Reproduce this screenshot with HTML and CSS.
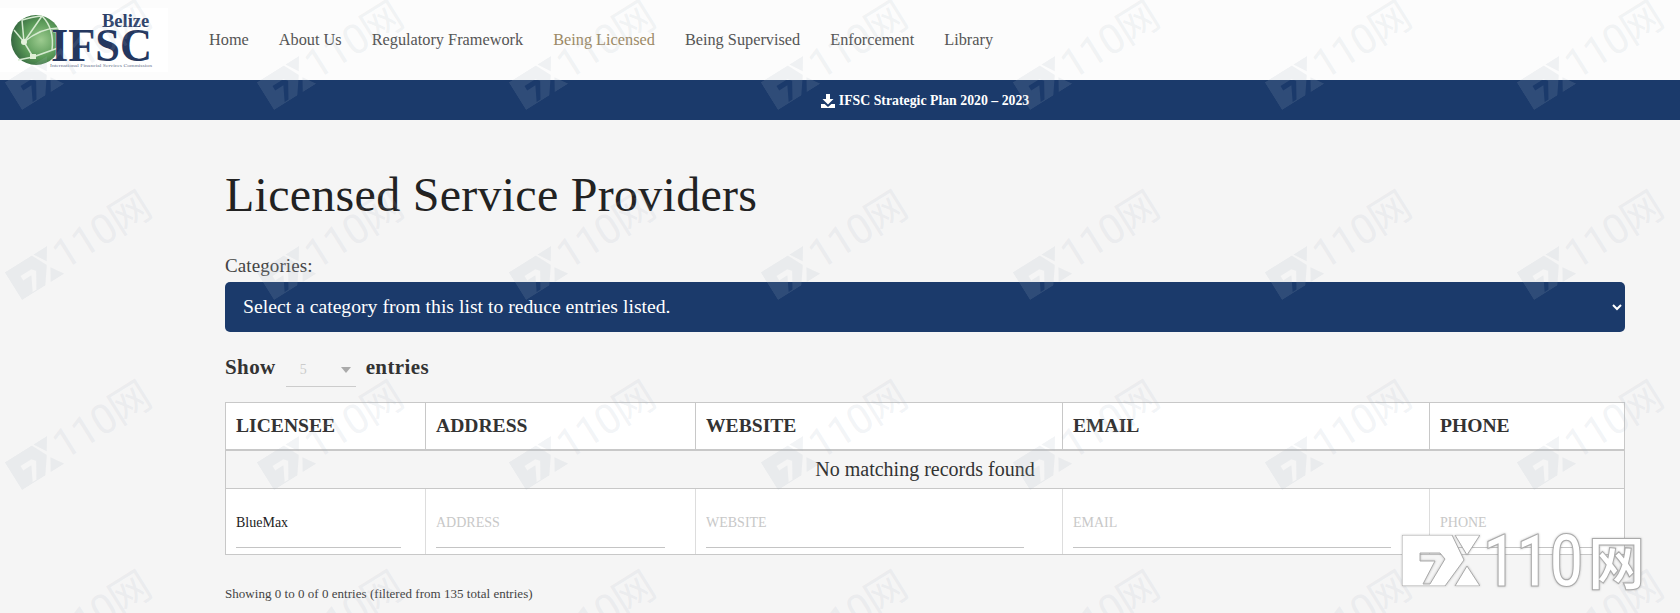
FILE: index.html
```html
<!DOCTYPE html>
<html lang="en">
<head>
<meta charset="utf-8">
<title>Licensed Service Providers</title>
<link rel="stylesheet" href="styles.css">
</head>
<body>
<svg class="defs" width="0" height="0" aria-hidden="true">
  <defs>
    <symbol id="fxmark" viewBox="0 0 78 51">
      <path fill-rule="evenodd" d="M0 0H50L62 25L43 51H0ZM18 18V26H33L21 49H28L43 24L38 18Z"/>
      <path d="M53 0H78L65 20Z"/>
      <path d="M65 31L78 51H53Z"/>
    </symbol>
    <radialGradient id="globe" cx="0.6" cy="0.5" r="0.65">
      <stop offset="0" stop-color="#9ccb8f"/>
      <stop offset="0.55" stop-color="#5a9a58"/>
      <stop offset="1" stop-color="#2f5f3c"/>
    </radialGradient>
  </defs>
</svg>

<header class="site-header">
  <a class="logo" href="#">
    <svg class="logo-art" width="168" height="64" viewBox="0 8 168 64">
      <circle cx="36" cy="40" r="25" fill="url(#globe)"/>
      <path class="globe-lines" d="M24 42L22 20M24 42L42 16M24 42L14 30M24 42L33 57L58 48M24 42L33 57L18 60M24 42C36 32 48 28 58 28M42 16C50 24 54 34 52 50M22 20C30 18 36 16 42 16"/>
      <circle cx="24" cy="42" r="3" fill="#e4f2dc"/>
      <rect x="30" y="54" width="6" height="5" fill="#dff0d6"/>
      <text class="logo-belize" x="102" y="27">Belize</text>
      <text class="logo-ifsc" x="51" y="61" textLength="101" lengthAdjust="spacingAndGlyphs">IFSC</text>
      <text class="logo-sub" x="50" y="67" textLength="102" lengthAdjust="spacingAndGlyphs">International Financial Services Commission</text>
    </svg>
  </a>
  <nav class="main-nav">
    <a href="#">Home</a>
    <a href="#">About Us</a>
    <a href="#">Regulatory Framework</a>
    <a href="#" class="active">Being Licensed</a>
    <a href="#">Being Supervised</a>
    <a href="#">Enforcement</a>
    <a href="#">Library</a>
  </nav>
</header>

<div class="banner">
  <a href="#">
    <svg class="dl-icon" width="14" height="14" viewBox="0 0 14 14"><path d="M5 0H9V5H12.5L7 10.5L1.5 5H5ZM0 10H3.6L7 13L10.4 10H14V14H0Z"/></svg>
    IFSC Strategic Plan 2020 – 2023
  </a>
</div>

<main class="content">
  <h1>Licensed Service Providers</h1>
  <label class="cat-label" for="cat">Categories:</label>
  <select class="cat-select" id="cat">
    <option>Select a category from this list to reduce entries listed.</option>
  </select>

  <div class="length-row">
    <span class="length-word">Show</span>
    <div class="length-select"><span>5</span><i class="caret"></i></div>
    <span class="length-word">entries</span>
  </div>

  <table class="data">
    <colgroup>
      <col class="c1"><col class="c2"><col class="c3"><col class="c4"><col class="c5">
    </colgroup>
    <thead>
      <tr><th>LICENSEE</th><th>ADDRESS</th><th>WEBSITE</th><th>EMAIL</th><th>PHONE</th></tr>
    </thead>
    <tbody>
      <tr class="empty"><td colspan="5">No matching records found</td></tr>
    </tbody>
    <tfoot>
      <tr>
        <td><input type="text" value="BlueMax" placeholder="LICENSEE"></td>
        <td><input type="text" placeholder="ADDRESS"></td>
        <td><input type="text" placeholder="WEBSITE"></td>
        <td><input type="text" placeholder="EMAIL"></td>
        <td><input type="text" placeholder="PHONE"></td>
      </tr>
    </tfoot>
  </table>
  <p class="info">Showing 0 to 0 of 0 entries (filtered from 135 total entries)</p>
</main>

<div class="watermarks" aria-hidden="true">
  <div class="wm-grid">
    <div class="wm"><svg><use href="#fxmark"/></svg><span>110网</span></div>
    <div class="wm"><svg><use href="#fxmark"/></svg><span>110网</span></div>
    <div class="wm"><svg><use href="#fxmark"/></svg><span>110网</span></div>
    <div class="wm"><svg><use href="#fxmark"/></svg><span>110网</span></div>
    <div class="wm"><svg><use href="#fxmark"/></svg><span>110网</span></div>
    <div class="wm"><svg><use href="#fxmark"/></svg><span>110网</span></div>
    <div class="wm"><svg><use href="#fxmark"/></svg><span>110网</span></div>
    <div class="wm"><svg><use href="#fxmark"/></svg><span>110网</span></div>
    <div class="wm"><svg><use href="#fxmark"/></svg><span>110网</span></div>
    <div class="wm"><svg><use href="#fxmark"/></svg><span>110网</span></div>
    <div class="wm"><svg><use href="#fxmark"/></svg><span>110网</span></div>
    <div class="wm"><svg><use href="#fxmark"/></svg><span>110网</span></div>
    <div class="wm"><svg><use href="#fxmark"/></svg><span>110网</span></div>
    <div class="wm"><svg><use href="#fxmark"/></svg><span>110网</span></div>
    <div class="wm"><svg><use href="#fxmark"/></svg><span>110网</span></div>
    <div class="wm"><svg><use href="#fxmark"/></svg><span>110网</span></div>
    <div class="wm"><svg><use href="#fxmark"/></svg><span>110网</span></div>
    <div class="wm"><svg><use href="#fxmark"/></svg><span>110网</span></div>
    <div class="wm"><svg><use href="#fxmark"/></svg><span>110网</span></div>
    <div class="wm"><svg><use href="#fxmark"/></svg><span>110网</span></div>
    <div class="wm"><svg><use href="#fxmark"/></svg><span>110网</span></div>
    <div class="wm"><svg><use href="#fxmark"/></svg><span>110网</span></div>
    <div class="wm"><svg><use href="#fxmark"/></svg><span>110网</span></div>
    <div class="wm"><svg><use href="#fxmark"/></svg><span>110网</span></div>
    <div class="wm"><svg><use href="#fxmark"/></svg><span>110网</span></div>
    <div class="wm"><svg><use href="#fxmark"/></svg><span>110网</span></div>
    <div class="wm"><svg><use href="#fxmark"/></svg><span>110网</span></div>
    <div class="wm"><svg><use href="#fxmark"/></svg><span>110网</span></div>
  </div>
</div>

<svg class="corner-logo" width="250" height="60" viewBox="0 0 250 60" aria-label="FX110网">
  <use href="#fxmark" x="3" y="4" width="78" height="51" class="corner-mark"/>
  <text class="corner-digits" x="84" y="55" textLength="100" lengthAdjust="spacingAndGlyphs">110</text>
  <text class="corner-cjk" x="189" y="53">网</text>
</svg>
</body>
</html>
```

FILE: styles.css
```css
* { box-sizing: border-box; }

html, body {
  margin: 0;
  padding: 0;
  height: 100%;
  overflow: hidden;
}

body {
  position: relative;
  background: #f5f5f5;
  color: #333;
  font-family: "Liberation Serif", "Times New Roman", serif;
}

a { color: inherit; text-decoration: none; }

.defs { position: absolute; }

/* Header */
.site-header {
  display: flex;
  align-items: center;
  height: 80px;
  background: #fcfcfc;
}

.logo {
  display: block;
  width: 168px;
  height: 64px;
  background: #fff;
}

.logo-art { display: block; }

.globe-lines {
  fill: none;
  stroke: #d5ead0;
  stroke-width: 1.5;
}

.logo-belize {
  font: bold 18.5px "Liberation Serif", serif;
  fill: #2c4068;
}

.logo-ifsc {
  font: bold 46px "Liberation Serif", serif;
  fill: #24375f;
  stroke: #fff;
  stroke-width: .6;
  paint-order: stroke;
}

.logo-sub {
  font: 5px "Liberation Serif", serif;
  fill: #69748c;
}

.main-nav {
  display: flex;
  gap: 30px;
  margin-left: 41px;
  font-size: 16.3px;
  color: #555;
}

.main-nav .active { color: #9c8a66; }

/* Banner */
.banner {
  display: flex;
  align-items: center;
  justify-content: center;
  height: 40px;
  padding: 1px 0 0 170px;
  background: #1b3a6b;
  color: #fff;
  font-size: 13.8px;
  font-weight: bold;
}

.banner a {
  display: flex;
  align-items: center;
  gap: 4px;
}

.dl-icon { fill: #fff; }

/* Content */
.content {
  display: flex;
  flex-direction: column;
  align-items: flex-start;
  width: 1400px;
  margin-left: 225px;
}

h1 {
  margin: 46px 0 0;
  font-size: 48px;
  font-weight: normal;
  line-height: 58px;
  letter-spacing: .27px;
  color: #222;
}

.cat-label {
  margin-top: 30px;
  font-size: 19px;
  line-height: 24px;
  letter-spacing: .1px;
  color: #444;
}

.cat-select {
  width: 100%;
  height: 50px;
  margin-top: 4px;
  padding: 0 14px 2px;
  border: 0;
  border-radius: 5px;
  background: #1b3a6b;
  color: #fff;
  font: 19.7px "Liberation Serif", serif;
}

.length-row {
  display: flex;
  align-items: center;
  gap: 10px;
  height: 41px;
  margin-top: 14px;
  font-size: 21px;
  font-weight: bold;
  letter-spacing: .4px;
}

.length-word { padding-top: 2px; }

.length-select {
  display: flex;
  align-items: center;
  justify-content: space-between;
  width: 70px;
  height: 39px;
  margin-top: 2px;
  padding: 6px 5px 0 14px;
  border-bottom: 1px solid #ccc;
  color: #ccc;
  font-size: 14px;
  font-weight: normal;
}

.caret {
  width: 0;
  height: 0;
  border-left: 5px solid transparent;
  border-right: 5px solid transparent;
  border-top: 6px solid #aaa;
}

/* Table */
.data {
  width: 1399px;
  margin-top: 15px;
  border-collapse: collapse;
  table-layout: fixed;
}

.c1 { width: 200px; }
.c2 { width: 270px; }
.c3 { width: 367px; }
.c4 { width: 367px; }
.c5 { width: 195px; }

th {
  height: 47px;
  padding: 0 10px;
  border: 1px solid #c8c8c8;
  border-bottom-width: 2px;
  background: #fff;
  color: #333;
  font-size: 19.6px;
  text-align: left;
}

.empty td {
  height: 39px;
  border: 1px solid #c8c8c8;
  font-size: 20px;
  text-align: center;
}

tfoot td {
  height: 66px;
  padding: 6px 10px 6px;
  border: 1px solid #c8c8c8;
  border-left-color: #ddd;
  border-right-color: #ddd;
  background: #fff;
}

tfoot td:first-child { border-left-color: #c8c8c8; }
tfoot td:last-child { border-right-color: #c8c8c8; }

tfoot input {
  display: block;
  width: 92%;
  height: 52px;
  padding: 3px 0 0;
  border: 0;
  border-bottom: 1px solid #c4c4c4;
  background: transparent;
  color: #222;
  font: 14px "Liberation Serif", serif;
}

tfoot input::placeholder { color: #c8c8c8; }

.info {
  margin: 30px 0 0;
  font-size: 13px;
  line-height: 18px;
  letter-spacing: .03px;
  color: #444;
}

/* Watermark layer */
.watermarks {
  position: absolute;
  inset: 0;
  overflow: hidden;
  pointer-events: none;
}

.wm-grid {
  display: grid;
  grid-template-columns: repeat(7, 252px);
  grid-auto-rows: 190px;
  margin: -41px 0 0 -46px;
}

.wm {
  display: flex;
  align-items: center;
  justify-content: center;
  gap: 1px;
  transform: rotate(-32deg);
  color: rgba(166, 180, 195, .15);
}

.wm svg {
  width: 50px;
  height: 33px;
  fill: currentColor;
}

.wm span {
  font: 41px/1 Roboto, "Noto Sans CJK SC", sans-serif;
  letter-spacing: -1px;
}

/* Corner logo */
.corner-logo {
  position: absolute;
  left: 1399px;
  top: 531px;
  overflow: visible;
  filter: drop-shadow(0 0 1px rgba(0, 0, 0, .25));
}

.corner-mark {
  fill: #fff;
  stroke: #aaa;
  stroke-width: 1;
}

.corner-digits {
  font: 500 72px Roboto, sans-serif;
  fill: #fff;
  stroke: #aaa;
  stroke-width: 1.2;
}

.corner-cjk {
  font: bold 57px "Noto Sans CJK SC", sans-serif;
  fill: #fff;
  stroke: #aaa;
  stroke-width: 1;
}
```
